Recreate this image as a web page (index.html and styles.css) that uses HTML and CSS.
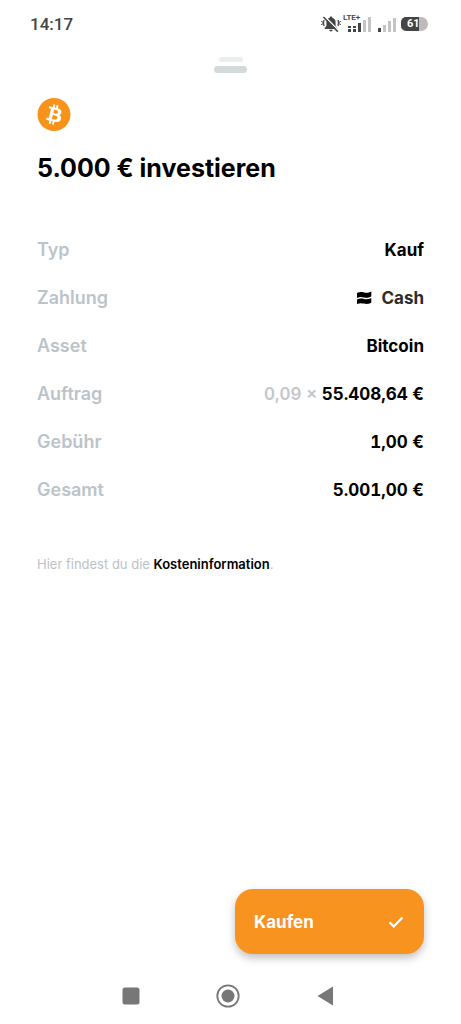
FILE: index.html
```html
<!DOCTYPE html>
<html lang="de">
<head>
<meta charset="utf-8">
<meta name="viewport" content="width=device-width, initial-scale=1">
<title>5.000 € investieren</title>
<link rel="stylesheet" href="styles.css">
</head>
<body>
<header class="status">
  <time class="clock">14:17</time>
  <div class="indicators">
    <svg class="bell" viewBox="0 0 20 18" aria-label="Stumm">
      <path d="M10 1.6c.8 0 1.3.5 1.3 1.2 2.200.6 3.300 2.400 3.300 4.700v3.600l1.700 2v.9H3.700v-.9l1.700-2V7.500c0-2.300 1.100-4.100 3.300-4.700 0-.7.500-1.200 1.300-1.200zM8.300 14.700h3.400c0 1-.7 1.700-1.700 1.700s-1.700-.7-1.700-1.700z" fill="#444"/>
      <path d="M2.800 5v2l-1 1 1 1v2M.8 6v1M.8 9v1M17.200 5v2l1 1-1 1v2M19.200 6v1M19.200 9v1" stroke="#444" stroke-width="1.300" fill="none"/>
      <path d="M3.400 1.200l14.400 14.600" stroke="#fff" stroke-width="1.600"/>
      <path d="M2.400 2l14.400 14.600" stroke="#444" stroke-width="1.500"/>
    </svg>
    <div class="mobile">
      <span class="lte">LTE+</span>
      <svg class="signal" viewBox="3 0 26 16" aria-label="Signal SIM 1">
        <path d="M5 10h3v2H5zM5 13h3v3H5zM10 10h3v2h-3zM10 13h3v3h-3zM15 7h3v9h-3z" fill="#444"/>
        <path d="M20 4h3v12h-3zM25 1h3v15h-3z" fill="#c4c4c4"/>
      </svg>
    </div>
    <svg class="signal-two" viewBox="0 0 19 16" aria-label="Signal SIM 2">
      <path d="M1 12h3v4H1z" fill="#444"/>
      <path d="M6 9h3v7H6zM11 5h3v11h-3zM16 2h3v14h-3z" fill="#c4c4c4"/>
    </svg>
    <div class="battery"><span class="charge">61</span></div>
  </div>
</header>

<div class="grabber"><span class="grab-short"></span><span class="grab-long"></span></div>

<main class="sheet">
  <svg class="coin" viewBox="0 0 32 32" aria-label="Bitcoin">
    <circle cx="16" cy="16" r="16" fill="#f7931a"/>
    <path fill="#fff" d="M23.189 14.020c.314-2.096-1.283-3.223-3.465-3.975l.708-2.840-1.728-.43-.69 2.765c-.454-.114-.920-.220-1.385-.326l.695-2.783L15.596 6l-.708 2.839c-.376-.086-.746-.170-1.104-.260l.002-.009-2.384-.595-.460 1.846s1.283.294 1.256.312c.700.175.826.638.805 1.006l-.806 3.235c.048.012.110.030.180.057l-.183-.045-1.130 4.532c-.086.212-.303.531-.793.410.018.025-1.256-.313-1.256-.313l-.858 1.978 2.250.561c.418.105.828.215 1.231.318l-.715 2.872 1.727.430.708-2.840c.472.127.930.245 1.378.357l-.706 2.828 1.728.430.715-2.866c2.948.558 5.164.333 6.097-2.333.752-2.146-.037-3.385-1.588-4.192 1.130-.260 1.980-1.003 2.207-2.538zm-3.950 5.538c-.533 2.147-4.148.986-5.320.695l.950-3.805c1.172.293 4.929.872 4.370 3.110zm.535-5.569c-.487 1.953-3.495.960-4.470.717l.860-3.450c.975.243 4.118.696 3.610 2.733z"/>
  </svg>
  <h1 class="title">5.000 € investieren</h1>

  <dl class="details">
    <div class="row"><dt>Typ</dt><dd>Kauf</dd></div>
    <div class="row"><dt>Zahlung</dt><dd class="cash">
      <svg class="cash-icon" viewBox="0 0 16 14" aria-hidden="true">
        <path d="M1 2.100C4 .7 5.800 1 8 1.500s4.400.6 7.300-.9V5.600c-2.900 1.500-5 1.400-7.300.9s-4.200-.8-7 .5zM1 8.500c3-1.400 4.800-1.100 7-.6s4.400.7 7.300-.8v4.700c-2.900 1.500-5 1.300-7.300.8s-4.200-.8-7 .5z" fill="#000"/>
      </svg>Cash</dd></div>
    <div class="row"><dt>Asset</dt><dd>Bitcoin</dd></div>
    <div class="row"><dt>Auftrag</dt><dd class="amount"><span class="quantity">0,09 ×</span> 55.408,64 €</dd></div>
    <div class="row"><dt>Gebühr</dt><dd class="amount">1,00 €</dd></div>
    <div class="row"><dt>Gesamt</dt><dd class="amount">5.001,00 €</dd></div>
  </dl>

  <p class="note">Hier findest du die <a class="link" href="#kosten">Kosteninformation</a>.</p>

  <button class="buy" type="button">Kaufen
    <svg class="check" viewBox="0 0 16 12" aria-hidden="true"><path d="M1.500 6.200l4.300 4.200L14.500 1.500" fill="none" stroke="#fff" stroke-width="2.200"/></svg>
  </button>
</main>

<nav class="system-nav">
  <button class="nav-button" type="button" aria-label="Letzte Apps"><svg class="nav-icon" viewBox="0 0 24 24"><rect x="3.500" y="3.500" width="17" height="17" rx="2.500" fill="#777"/></svg></button>
  <button class="nav-button" type="button" aria-label="Startseite"><svg class="nav-icon" viewBox="0 0 24 24"><circle cx="12" cy="12" r="10.700" fill="none" stroke="#777" stroke-width="1.800"/><circle cx="12" cy="12" r="6.500" fill="#777"/></svg></button>
  <button class="nav-button" type="button" aria-label="Zurück"><svg class="nav-icon" viewBox="0 0 24 24"><path d="M4.500 12L20 2.500v19z" fill="#777"/></svg></button>
</nav>
</body>
</html>
```
FILE: styles.css
```css
* {
  box-sizing: border-box;
}

body {
  margin: 0;
  min-height: 100vh;
  display: flex;
  flex-direction: column;
  background: #fff;
  color: #000;
  font-family: Inter, sans-serif;
}

.status {
  display: flex;
  justify-content: space-between;
  align-items: center;
  height: 48px;
  padding: 0 33px 0 30px;
  color: #444;
}

.clock {
  font: 500 17px/24px Roboto, sans-serif;
}

.indicators {
  display: flex;
  align-items: center;
  gap: 5px;
}

.bell {
  width: 20px;
  height: 18px;
}

.mobile {
  position: relative;
  height: 16px;
}

.lte {
  position: absolute;
  left: -3px;
  top: -2px;
  font: 600 8px/8px Roboto, sans-serif;
}

.signal {
  display: block;
  width: 26px;
  height: 16px;
}

.signal-two {
  width: 19px;
  height: 16px;
}

.battery {
  width: 27px;
  height: 14px;
  padding-left: 6px;
  border-radius: 5px 7px 7px 5px;
  background: linear-gradient(to right, #444 68%, #bbb 68%);
}

.charge {
  display: block;
  color: #fff;
  font: 700 11px/14px Roboto, sans-serif;
}

.grabber {
  display: flex;
  flex-direction: column;
  align-items: center;
  gap: 4px;
  padding-top: 9px;
}

.grab-short {
  width: 24px;
  height: 5px;
  border-radius: 3px;
  background: #ebeeef;
}

.grab-long {
  width: 33px;
  height: 7px;
  border-radius: 4px;
  background: #d4d9dc;
}

.sheet {
  flex: 1;
  display: flex;
  flex-direction: column;
  padding: 25px 37px 14px;
}

.coin {
  width: 34px;
  height: 33px;
}

.title {
  margin: 21px 0 42px;
  font-size: 25px;
  line-height: 32px;
  font-weight: 700;
}

.details {
  margin: 0 0 40px;
}

.row {
  display: flex;
  justify-content: space-between;
  align-items: center;
  height: 48px;
  font-size: 18px;
  line-height: 24px;
  font-weight: 600;
}

.row dt {
  color: #bcc3c9;
}

.row dd {
  margin: 0;
  font-size: 17px;
  font-weight: 700;
}

.row .cash {
  display: flex;
  align-items: center;
  gap: 9px;
  color: #2b2b2b;
}

.cash-icon {
  width: 16px;
  height: 14px;
}

.amount {
  font-variant-numeric: tabular-nums;
}

.quantity {
  color: #c3c7cb;
  font-weight: 600;
}

.note {
  margin: 0;
  color: #bcc1c6;
  font-size: 13px;
  line-height: 20px;
}

.link {
  color: #000;
  font-weight: 600;
  text-decoration: none;
}

.buy {
  display: flex;
  justify-content: space-between;
  align-items: center;
  align-self: flex-end;
  width: 189px;
  height: 65px;
  margin-top: auto;
  padding: 0 20px 0 19px;
  border: 0;
  border-radius: 18px;
  background: #f7931e;
  box-shadow: 0 4px 9px rgba(0, 0, 0, 0.25);
  color: #fff;
  font: 700 17px/24px Inter, sans-serif;
}

.check {
  width: 16px;
  height: 12px;
}

.system-nav {
  display: flex;
  justify-content: center;
  gap: 73px;
  height: 56px;
  padding-right: 6px;
}

.nav-button {
  display: grid;
  place-items: center;
  width: 24px;
  height: 56px;
  padding: 0;
  border: 0;
  background: none;
}

.nav-icon {
  width: 24px;
  height: 24px;
}
```
